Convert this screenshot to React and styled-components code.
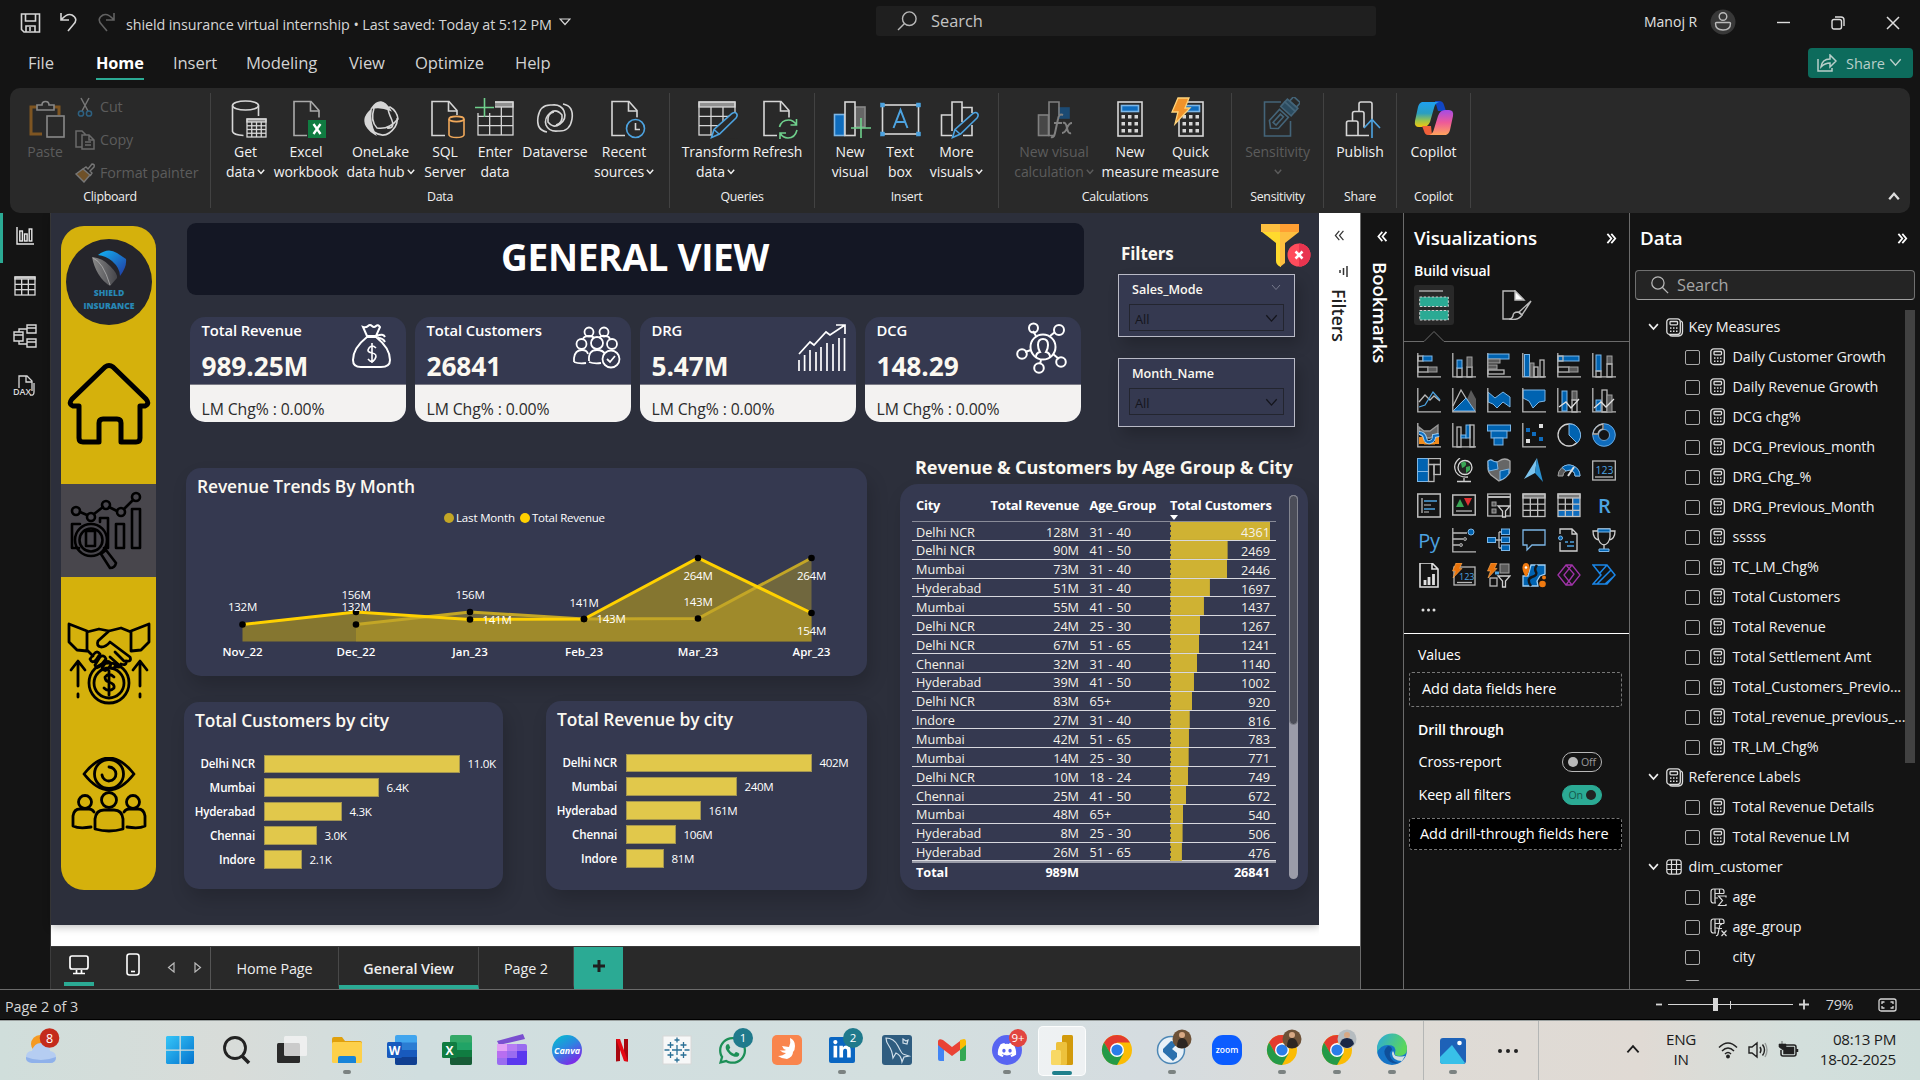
import React from 'react';
import styled, { createGlobalStyle } from 'styled-components';
import { FaWhatsapp, FaLinkedinIn, FaDiscord } from 'react-icons/fa';

const Global = createGlobalStyle`
  * { box-sizing: border-box; }
  body { margin: 0; background: #141414; overflow: hidden; }
  svg { display: block; flex: none; }
  svg text { font-family: "Open Sans", "Noto Sans", sans-serif; }
`;

const Screen = styled.div`
  width: 1920px; height: 1080px; display: flex; flex-direction: column;
  background: #141414; color: #fff; font-family: "Open Sans", "Noto Sans", sans-serif;
  font-size: 14px; line-height: 1; white-space: nowrap; overflow: hidden;
`;

/* ---------- title bar and menu ---------- */
const TitleBar = styled.header`
  height: 42px; display: grid; grid-template-columns: 876px 500px 1fr; flex: none;
`;
const TitleLeft = styled.div`
  display: flex; align-items: center; padding: 5px 0 0 20px; color: #d6d6d6; font-size: 14.35px;
  letter-spacing: -0.09px;
`;
const FileName = styled.span`margin: 3px 7px 0 10px;`;
const SearchBox = styled.div`
  margin-top: 6px; height: 30px; border-radius: 3px; background: #1f1f1f; display: flex; align-items: center;
  gap: 14px; padding-left: 21px; font-size: 16.4px; color: #c4c4c4;
`;
const TitleRight = styled.div`
  display: flex; align-items: center; padding: 2px 0 0 268px; font-size: 14px; color: #e0e0e0;
  & > svg:nth-of-type(1) { margin-left: 13px; }
  & > svg:nth-of-type(2) { margin-left: 41px; }
  & > svg:nth-of-type(3) { margin-left: 41px; margin-top: 2px; }
  & > svg:nth-of-type(4) { margin-left: 41px; margin-top: 2px; }
`;
const MenuBar = styled.nav`
  height: 46px; flex: none; display: flex; justify-content: space-between; padding: 6px 7px 0 28px;
`;
const MenuItems = styled.div`display: flex; gap: 29px; font-size: 16.6px; color: #d2d2d2;`;
const MenuItem = styled.span`
  height: 32px; padding-top: 7px; letter-spacing: -0.1px; width: ${p => p.$w}px;
  ${p => p.$on && 'color:#fff;font-weight:700;font-size:16.3px;border-bottom:2px solid #2baa94;'}
`;
const ShareButton = styled.button`
  width: 105px; height: 30px; border: 0; border-radius: 4px; background: #0d6b5c; color: #b9cfca;
  font: 14.5px "Open Sans", sans-serif; display: flex; align-items: center; gap: 9px; padding: 0 9px;
  & svg:last-child { margin-left: -5px; }
`;

/* ---------- ribbon ---------- */
const Ribbon = styled.section`
  height: 125px; width: 1900px; margin-left: 10px; border-radius: 10px; background: #292929; display: flex; flex: none;
  padding: 5px 0; position: relative; z-index: 2;
`;
const Group = styled.div`
  width: ${p => p.$w}px; border-right: 1px solid #424242; display: flex; flex-direction: column;
  justify-content: space-between; padding-top: 4px;
`;
const GroupButtons = styled.div`display: flex; height: 88px; padding-left: ${p => p.$pad}px;`;
const GroupLabel = styled.div`height: 17px; text-align: center; font-size: 12.4px; letter-spacing: -0.3px; color: #f0f0f0;`;
const RibbonButton = styled.div`
  width: ${p => p.$w}px; display: flex; flex-direction: column; align-items: center; font-size: 14px; line-height: 20px;
  color: ${p => (p.$off ? '#5c5c5c' : '#f2f2f2')}; text-align: center; letter-spacing: -0.06px;
  & > svg { margin-bottom: 3px; }
  & em { font-style: normal; height: 20px; display: flex; align-items: center; gap: 2px; }
`;
const PasteButton = styled(RibbonButton)`& > svg { margin: 1px -8px 2px -2px; }`;
const ClipboardItems = styled.div`display: flex; flex-direction: column; margin: -6px 0 0 7px; color: #5c5c5c;`;
const ClipboardItem = styled.div`height: 32.7px; flex: none; display: flex; align-items: center; gap: 5px; font-size: 14.3px; letter-spacing: -0.1px;`;
const Collapse = styled.div`flex: 1; display: flex; justify-content: flex-end; align-items: flex-end; padding: 0 10px 8px 0;`;

/* ---------- workspace ---------- */
const Workspace = styled.main`height: 776px; display: flex; flex: none;`;
const Rail = styled.aside`
  width: 51px; border-right: 1px solid #3c3c3c; display: flex; flex-direction: column; align-items: center;
`;
const RailItem = styled.div`
  height: 50px; width: 100%; display: flex; align-items: center; justify-content: center;
  border-left: 3px solid ${p => (p.$on ? '#2baa94' : 'transparent')}; padding: 0 3px 4px 0;
`;
const Center = styled.div`width: 1309px; display: flex; flex-direction: column;`;
const CanvasRow = styled.div`height: 733px; display: flex; background: #fff;`;
const Canvas = styled.div`
  width: 1268px; height: 712px; background: #2c2f3b; display: flex; flex: none; box-shadow: 0 2px 8px rgba(0,0,0,.25);
`;
const FilterPane = styled.aside`
  width: 41px; background: #fff; color: #222; display: flex; flex-direction: column; align-items: center;
  padding-top: 17px; clip-path: inset(0);
`;
const FilterGlyph = styled.svg`margin: 24px 0 11px 4px;`;
const VerticalLabel = styled.span`
  writing-mode: vertical-rl; font-weight: 600; font-size: ${p => p.$size}px; line-height: 20px; margin-right: ${p => p.$mr || 0}px;
`;

/* report navigation */
const NavStrip = styled.div`
  width: 95px; height: 664px; margin: 13px 0 0 10px; border-radius: 23px; background: #d5b10c; overflow: hidden;
  display: flex; flex-direction: column; align-items: center;
`;
const LogoDisc = styled.div`
  width: 86px; height: 86px; margin: 13px 0 37px 1px; border-radius: 50%; background: #25252b; flex: none;
  display: flex; flex-direction: column; align-items: center; padding-top: 10px; color: #2787b5;
  font: 800 8.6px/12.5px "Open Sans", sans-serif; text-align: center;
`;
const NavSelected = styled.div`
  width: 95px; height: 93px; margin: 39px 0 45px; background: #48464c; display: flex; align-items: center; justify-content: center;
`;
const NavGap = styled.div`height: 51px;`;

const Report = styled.div`flex: 1; display: flex; flex-direction: column; padding-left: 27px;`;
const TopRow = styled.div`height: 240px; display: flex; padding-left: 4px;`;
const TopMain = styled.div`width: 897px; padding-top: 10px;`;
const Banner = styled.h1`
  margin: 0; height: 72px; border-radius: 9px; background: #141724; font-size: 37px; font-weight: 700;
  display: flex; align-items: center; justify-content: center; padding: 0 1px 5px 0; letter-spacing: -0.3px;
`;
const Kpis = styled.div`display: flex; gap: 9px; margin: 22px 0 0 3px;`;
const Kpi = styled.article`
  width: 216px; height: 105px; border-radius: 15px; background: #353950; overflow: hidden; flex: none;
  display: flex; flex-direction: column;
`;
const KpiTop = styled.div`height: 68px; display: flex; justify-content: space-between; padding: 5px ${p => p.$pr}px 0 11.5px; border-bottom: 1px solid #7a7a85;`;
const KpiName = styled.div`font-size: 14.8px; font-weight: 600; line-height: 17px; letter-spacing: -0.1px;`;
const KpiValue = styled.div`font-size: 26.3px; font-weight: 700; line-height: 26px; margin-top: 14px; color: #fbf8f0; letter-spacing: -0.1px;`;
const KpiNote = styled.div`flex: 1; background: #f3f2f1; color: #2c2c2c; padding: 16.5px 0 0 11.5px; font-size: 15.8px; letter-spacing: -0.1px;`;

const Slicers = styled.div`width: 193px; margin-left: 34px; padding-top: 11px;`;
const SlicerHead = styled.div`
  display: flex; justify-content: space-between; height: 50px; padding-left: 3px; font-size: 17px; font-weight: 700; padding-top: 0;
  color: #fbf8f0; & span { padding-top: 21px; letter-spacing: -0.1px; }
`;
const Slicer = styled.div`
  width: 177px; height: ${p => p.$h}px; border: 1px solid #b9bac6; background: #353950; padding: 9px 10px; margin-bottom: 21px;
  box-shadow: 5px 8px 14px rgba(0,0,0,.2);
`;
const SlicerName = styled.div`display: flex; justify-content: space-between; height: 20px; padding: 0 3px 0 3px; font-size: 12.6px; font-weight: 600; color: #fbf8f0;`;
const Dropdown = styled.div`
  width: 155px; height: 27px; border: 1px solid #23252f; display: flex; align-items: center; justify-content: space-between;
  padding: 3px 5px 0 5px; font-size: 12.8px; color: #14151c;
`;

const BottomRow = styled.div`display: flex; height: 459px;`;
const Charts = styled.div`width: 684px; padding-top: 15px;`;
const Card = styled.section`
  background: #353950; border-radius: ${p => p.$r || 15}px; width: ${p => p.$w}px; height: ${p => p.$h}px;
  box-shadow: 4px 10px 18px rgba(0,0,0,.17);
`;
const CardTitle = styled.h2`margin: 0; font-size: 17.4px; line-height: 20px; font-weight: 600; color: #fbf8f0; padding: 8px 0 1px 11px; letter-spacing: -0.1px;`;
const TrendCard = styled(Card)`margin-left: 3px;`;
const CityRow = styled.div`display: flex; justify-content: space-between; align-items: flex-start; margin: 26px 0 0 1px;`;
const CityCard = styled(Card)`margin-top: ${p => p.$top}px;`;
const BarList = styled.div`margin-top: 23.5px; display: flex; flex-direction: column; gap: 5px;`;
const BarLine = styled.div`
  height: 18.9px; display: grid; grid-template-columns: 71px auto 1fr; align-items: center; font-size: 11.6px; color: #fff;
  & b { text-align: right; font-weight: 600; letter-spacing: -0.15px; }
  & span { letter-spacing: -0.35px; }
`;
const Bar = styled.i`display: block; height: 18.9px; background: #e1c84b; border: 1px solid #a39550; margin: 0 8px 0 8.5px; width: ${p => p.$w}px;`;

const TableArea = styled.div`margin-left: 33px; width: 408px;`;
const TableTitle = styled.h2`margin: 0; height: 31px; padding: 4px 0 0 15px; font-size: 18.1px; line-height: 20px; font-weight: 700; color: #fbf8f0; letter-spacing: -0.1px;`;
const TableBody = styled.div`display: flex; justify-content: space-between; padding: 11px 10.5px 0 12px;`;
const Table = styled.div`width: 364px;`;
const Row = styled.div`
  height: 18.87px; display: grid; grid-template-columns: 82px 81px 91px 1fr; align-items: center; border-bottom: 1px solid #d8d8de;
  font-size: 12.7px; padding-left: 4px; color: #f4f1e8; padding-right: 6px; letter-spacing: -0.03px;
  & > * { padding-top: 2px; }
  & > :nth-child(2) { text-align: right; }
  & > :nth-child(3) { padding-left: 10.5px; word-spacing: 1px; }
`;
const HeadRow = styled(Row)`
  height: 27px; font-weight: 700; font-size: 12.8px; color: #fff; border-color: #8a8c99; align-items: start; padding-top: 2px; letter-spacing: -0.2px;
  & > * { white-space: nowrap; }
  & > :nth-child(2) { direction: rtl; }
`;
const TotalRow = styled(Row)`border: 0; border-top: 2px solid #9a9ca8; height: 20px; padding-bottom: 2px; font-weight: 700; color: #fff;`;
const SortHead = styled.div`
  display: flex; flex-direction: column; align-items: flex-start;
  &::after { content: ''; border: 4.5px solid transparent; border-top: 5px solid #fff; border-bottom: 0; margin-top: 3px; }
`;
const DataCell = styled.div`
  height: 17.9px; border-left: 1px dashed #b09a3a; text-align: right; line-height: 16px;
  background: linear-gradient(#cfb233, #cfb233) left / ${p => p.$w}px 100% no-repeat;
`;
const TotalCell = styled.div`text-align: right;`;
const ScrollTrack = styled.div`width: 9px; height: 384px; border-radius: 5px; background: #9b9ca9;`;
const ScrollThumb = styled.div`height: 230px; border-radius: 5px; background: #4b4d58; border: 1px solid #83858f;`;

/* page tabs */
const Tabs = styled.div`height: 43px; background: #292929; border-top: 1px solid #3a3a3a; display: flex;`;
const TabTools = styled.div`width: 160px; display: flex; border-right: 1px solid #555; padding-left: 13px; align-items: flex-start; flex: none;`;
const DeviceTool = styled.div`
  width: 30px; height: 39px; padding-top: ${p => p.$top}px; display: flex; justify-content: center; margin-right: ${p => p.$gap}px; flex: none;
  border-bottom: 4px solid ${p => (p.$on ? '#2baa94' : 'transparent')};
`;
const Arrow = styled.div`padding: 15px 0 0; width: ${p => p.$w}px; flex: none;`;
const Tab = styled.div`
  width: ${p => p.$w}px; border-right: 1px solid #484848; display: flex; align-items: center; justify-content: center; font-size: 14.4px; color: #eee;
  letter-spacing: -0.1px; padding-top: 6px; border-bottom: 4px solid ${p => (p.$on ? '#2baa94' : 'transparent')}; font-weight: ${p => (p.$on ? 600 : 400)};
`;
const AddTab = styled.div`width: 49px; background: #2baa94; color: #1c1c1c; display: flex; align-items: center; justify-content: center; padding-bottom: 4px;`;

/* side panes */
const Bookmarks = styled.aside`width: 43px; border-left: 1px solid #6b6b6b; padding-top: 18px; display: flex; flex-direction: column; align-items: center; gap: 20px; color: #fff;`;
const VizPane = styled.aside`width: 227px; border-left: 1px solid #6b6b6b; border-right: 1px solid #6b6b6b;`;
const DataPane = styled.aside`width: 290px;`;
const PaneTitle = styled.h3`
  margin: 0; height: 50px; display: flex; align-items: center; justify-content: space-between; font-size: 18.8px; font-weight: 600;
  padding: 0 12px 0 10px; letter-spacing: -0.1px;
`;
const SubTitle = styled.div`font-size: 14.1px; font-weight: 600; padding: 1px 0 0 10px; height: 22px; letter-spacing: -0.13px;`;
const Modes = styled.div`display: flex; padding-left: 10px; height: 56px;`;
const Mode = styled.div`width: 40px; height: 40px; border-radius: 3px; background: ${p => (p.$on ? '#292929' : 'transparent')}; margin-right: 43px; display: flex; align-items: center; justify-content: center;`;
const ModeRule = styled.svg`margin-top: -10px;`;
const VizGrid = styled.div`
  display: grid; grid-template-columns: repeat(6, 35.05px); grid-auto-rows: 35px; justify-items: center; align-items: center;
  padding: 4px 0 0 7.5px; height: 290px; border-bottom: 1px solid #fff; align-content: start;
`;
const LanguageGlyph = styled.span`font-size: 20px; line-height: 30px; color: #4da3e0; letter-spacing: -0.3px; font-weight: ${p => p.$w || 400};`;
const FieldLabel = styled.div`padding-left: 14px; font-size: 14.1px; height: ${p => p.$h}px; line-height: ${p => p.$lh || p.$h}px; font-weight: ${p => p.$w || 400}; letter-spacing: -0.08px;`;
const FieldWell = styled.div`
  margin-left: 5px; width: 213px; height: ${p => p.$h}px; border: 1px dashed #777; border-radius: 3px; background: ${p => p.$bg || 'transparent'};
  display: flex; align-items: center; padding-left: ${p => p.$pad}px; font-size: 14.5px; letter-spacing: -0.06px;
`;
const ToggleRow = styled.div`display: flex; height: 33px; align-items: center; justify-content: space-between; padding: 0 27px 0 14.5px; font-size: 14.3px; letter-spacing: -0.1px;`;
const Toggle = styled.div`
  width: 40px; height: 20px; border-radius: 10px; font-size: 10.6px; display: flex; align-items: center; gap: 3px; padding: 0 5px;
  border: 1px solid ${p => (p.$on ? '#2baa94' : '#b8b8b8')}; background: ${p => (p.$on ? '#2baa94' : 'transparent')};
  color: ${p => (p.$on ? '#15584c' : '#999')}; flex-direction: ${p => (p.$on ? 'row-reverse' : 'row')};
  &::before { content: ''; width: 10px; height: 10px; border-radius: 50%; background: ${p => (p.$on ? '#222' : '#b8b8b8')}; }
`;
const FieldSearch = styled.div`
  width: 280px; height: 30px; margin: 7px 0 0 5px; border: 1px solid #707070; border-bottom-color: #a0a0a0; border-radius: 4px; background: #242424;
  display: flex; align-items: center; gap: 8px; padding-left: 15px; font-size: 16.3px; color: #a6a6a6;
`;
const TreeArea = styled.div`height: 671px; margin-top: 10px; display: flex; overflow: hidden;`;
const Tree = styled.div`flex: 1; padding-top: 2px;`;
const TreeRow = styled.div`
  height: 30px; display: flex; align-items: center; font-size: 14.35px; letter-spacing: -0.12px; color: #f0f0f0;
  padding-left: ${p => (p.$child ? 55 : 18)}px; & span { margin-left: 6.500px; }
`;
const Checkbox = styled.i`width: 15px; height: 15px; border: 1px solid #a8a8a8; border-radius: 2px; margin-right: 10px; flex: none;`;
const IconSlot = styled.div`width: 16px; height: 20px; display: flex; align-items: center; margin-left: ${p => p.$ml || 0}px;`;
const TreeScroll = styled.div`width: 10px; height: 453px; background: #424242; margin-right: 5px;`;

/* status and task bar */
const StatusBar = styled.footer`
  height: 31px; flex: none; border-top: 1px solid #6b6b6b; display: flex; justify-content: space-between; padding: 10px 23px 0 5px; font-size: 14.4px;
  color: #d6d6d6; border-bottom: 1px solid #000; letter-spacing: -0.05px;
`;
const Zoom = styled.div`display: flex; gap: 15px; margin-top: -3px; & > span { padding-top: 1px; letter-spacing: -0.4px; margin-left: -1px; } & > :last-child { margin: 1px 0 0 10px; }`;
const TaskBar = styled.footer`
  height: 60px; flex: none; background: linear-gradient(90deg, #d0dedb 0, #d8dcd9 230px, #d0dedf 420px, #d3dfdf 900px, #d5dce0 1150px, #dedbd6 1400px, #e0dad4 1640px, #d3dfdc 1800px, #cfdedb 100%);
  display: flex; color: #1c1c1c; border-top: 1px solid #9aa09f;
`;
const TaskWeather = styled.div`width: 152px; padding: 6px 0 0 25px;`;
const TaskItem = styled.div`
  width: ${p => p.$w || 55}px; height: 59px; display: flex; flex-direction: column; align-items: center; padding-top: 14px; gap: 5px;
  & > svg { overflow: visible; }
`;
const TaskTile = styled.div`
  width: 48px; height: 50px; margin-top: -9px; border-radius: 5px; background: rgba(255,255,255,.6); border: 1px solid rgba(255,255,255,.8);
  display: flex; flex-direction: column; align-items: center; justify-content: space-between; padding-top: 8px;
`;
const Dot = styled.i`width: ${p => p.$w || 8}px; height: 4px; border-radius: 2px; background: ${p => p.$c || '#7b8281'};`;
const TaskSep = styled.i`width: 1px; height: 59px; background: #b4b6b5;`;
const Tray = styled.div`flex: 1; display: flex; align-items: center; padding: 0 24px 3px 87px; font-size: 15.2px;`;
const TrayText = styled.div`text-align: ${p => p.$align}; line-height: 20px; letter-spacing: -0.3px; margin-left: ${p => p.$ml}px;`;
const TraySymbols = styled.div`display: flex; gap: 10px; margin: 2px auto 0 22px; align-items: center;`;

/* ---------- shared glyphs ---------- */
const W = '#d6d6d6', B = '#0f6cbd', LB = '#4da3e0';
const Chev = ({ s = 8, c = 'currentColor', w = 1.4, up }) => (
  <svg width={s} height={s * 0.7} viewBox="0 0 10 7" fill="none" stroke={c} strokeWidth={w}>
    <path d={up ? 'M1 6L5 1.5 9 6' : 'M1 1l4 4.5L9 1'} />
  </svg>
);
const Dbl = ({ right, c = '#fff', w = 1.9, s = 11 }) => (
  <svg width={s} height={s} viewBox="0 0 11 12" fill="none" stroke={c} strokeWidth={w}>
    <path d={right ? 'M1 1l4.3 5L1 11M5.3 1l4.3 5-4.3 5' : 'M5.3 1L1 6l4.3 5M9.8 1L5.5 6l4.3 5'} />
  </svg>
);
const Glass = ({ s = 20, flip, c = '#b8b8b8' }) => (
  <svg width={s} height={s} viewBox="0 0 20 20" fill="none" stroke={c} strokeWidth="1.4">
    <g transform={flip ? '' : 'matrix(-1 0 0 1 20 0)'}><circle cx="7.7" cy="7.7" r="6.8" /><path d="M12.5 12.5L19 19" /></g>
  </svg>
);
const RI = ({ children, o = 1 }) => (
  <svg width="44" height="42" viewBox="0 0 44 42" fill="none" stroke={W} strokeWidth="1.6" opacity={o}>{children}</svg>
);
const Page = ({ x = 9 }) => (
  <g transform={`translate(${x} 0)`}><path d="M14 38.500H1V4.500h17l8 9v7" /><path d="M17.500 5v9H26" /></g>
);
const Cells = ({ x, y, w, h, cols, rows, c = W, sw = 1.3, head }) => (
  <g stroke={c} strokeWidth={sw}>
    <rect x={x} y={y} width={w} height={h} />
    {head && <rect x={x} y={y} width={w} height={head} fill={c} fillOpacity=".6" />}
    {Array.from({ length: cols - 1 }, (_, i) => <path key={'c' + i} d={`M${x + (w / cols) * (i + 1)} ${y + (head || 0)}V${y + h}`} />)}
    {Array.from({ length: rows - 1 }, (_, i) => <path key={'r' + i} d={`M${x} ${y + (head || 0) + ((h - (head || 0)) / rows) * (i + 1)}H${x + w}`} />)}
  </g>
);
const Pencil = () => <path d="M17.500 40.500l2.500-8L38 16.500q3-2 4.500 0t-.5 4.500L25.500 37zM20 32.500l5 4.500" stroke={LB} fill="#292929" />;
const CalcBody = ({ x }) => (
  <g transform={`translate(${x} 4)`}>
    <rect x="1" y="1" width="24" height="34" /><rect x="4.500" y="4.500" width="17" height="6" fill="#0f6cbd" stroke="#7cb6e6" />
    {[14, 21, 28].map(y => [4.5, 11, 17.5].map(px => <rect key={px + '-' + y} x={px} y={y} width="3.500" height="3.500" fill={W} stroke="none" />))}
  </g>
);

const icons = {
  paste: <RI o=".55"><path d="M16 36H5V9h6M28 9h5v8" stroke="#c47a1d" strokeWidth="3" /><path d="M11 12V7h5q0-3.500 3.500-3.500T23 7h5v5z" /><rect x="21" y="18" width="17" height="21" fill="#292929" /></RI>,
  getdata: <RI><ellipse cx="21.500" cy="8.500" rx="13" ry="4.500" /><path d="M8.500 8.500v26q1 3.500 11 4M34.500 8.500V19" /><rect x="22" y="21" width="20" height="20" fill="#292929" stroke="none" /><Cells x={23} y={22} w={19} h={18} cols={4} rows={4} head={3} /></RI>,
  excel: <RI><g opacity=".75"><Page /></g><rect x="24" y="23" width="18" height="18" fill="#107c41" stroke="none" /><path d="M29.500 27l7 10m0-10l-7 10" stroke="#fff" strokeWidth="2.300" /></RI>,
  onelake: <RI><path d="M13 11q9-13 18 2-9-4-18-2z" fill={W} /><path d="M12 13Q2 22 9 31q2 3 7 6-6-12-4-24z" fill={W} /><path d="M15 11q-4 13 3 20 12 2 21-9-1-8-8-12-4 0 1 11t-4 10" /><path d="M15 35q12 8 21-5 3-5 2-9" /></RI>,
  sql: <RI><Page x={8} /><g stroke="#f0a85a"><rect x="24" y="18" width="19" height="24" fill="#292929" stroke="none" /><ellipse cx="33.500" cy="22" rx="7.500" ry="2.600" /><path d="M26 22v16q1 2.500 7.500 2.500T41 38V22" /></g></RI>,
  enter: <RI><Cells x={5} y={5} w={35} h={33} cols={3} rows={3} head={5} /><path d="M0 0h22v16H0z" fill="#292929" stroke="none" /><path d="M2 10.500h19M11.500 1v19" stroke="#6fd08c" /></RI>,
  dataverse: <RI><path d="M14 35Q3 33 5 20T19 8q9-1 12 6 3 8-4 13t-12-2q-1-9 6-10" /><path d="M30 7q11 2 9 15T25 34q-9 1-12-6-2-7 4-12t12 2q1 8-6 10" /></RI>,
  recent: <RI><Page /><circle cx="33.500" cy="31.500" r="11" fill="#292929" stroke="none" /><circle cx="33.500" cy="31.500" r="9" stroke={LB} /><path d="M33.500 26v6.500H38" /></RI>,
  transform: <RI><Cells x={5} y={5} w={36} h={33} cols={3} rows={3} head={5} /><path d="M18 41L44 15v27z" fill="#292929" stroke="none" /><Pencil /></RI>,
  refresh: <RI><Page x={7} /><circle cx="32" cy="32" r="11" fill="#292929" stroke="none" /><path d="M23.500 30q2-7 9-7 5 0 8 5m0-6v6h-6M41 33q-2 8-9 8-5 0-8-5m0 6v-6h6" stroke="#6fd08c" /></RI>,
  newvisual: <RI><rect x="6.500" y="17.500" width="10" height="21" fill={B} stroke="#7cb6e6" /><rect x="27" y="10" width="10" height="20" fill="#666" stroke="#888" /><rect x="17" y="5" width="10" height="33.500" fill="#292929" /><path d="M23 31h20M33 21v20" stroke="#6fd08c" /></RI>,
  textbox: <RI><rect x="4.500" y="8" width="36" height="29" />{[[4.5, 8], [40.5, 8], [4.5, 37], [40.5, 37]].map(([x, y]) => <rect key={x + '-' + y} x={x - 2} y={y - 2} width="4" height="4" fill={LB} stroke={LB} strokeWidth=".5" />)}<path d="M15.500 31L22.500 13l7 18M18 25h9" stroke={LB} strokeWidth="2" /></RI>,
  morevisual: <RI><path d="M17 38.500H6.500V18H17M27 10.500h10V16M37 28v10.500h-9" /><path d="M17 34V5h10v20" /><Pencil /></RI>,
  newcalc: <RI o=".5"><rect x="6.500" y="18" width="10" height="20.500" fill="#666" /><rect x="27" y="11" width="10" height="10" fill={B} stroke={B} /><path d="M27 18V5H17v33.500h6" /><path d="M31 18q-4-2-5 4l-3 14q-1 5-4 4M22 26h8M31 26q3-1 4 5t4 5M40 26q-3 0-5 5t-5 5" strokeWidth="2" /></RI>,
  measure: <RI><CalcBody x={9} /></RI>,
  quick: <RI><CalcBody x={9} /><path d="M9 1h11l-4 10h5L6 27l3-12H3z" fill="#f0932b" stroke="#ffd37a" strokeWidth="1.300" /></RI>,
  sensitivity: <RI o=".5"><path d="M25 5H8.500v34h26V24" stroke="#5fa0c8" /><g stroke="#5fa0c8" transform="rotate(42 26 20)"><rect x="21" y="-3" width="9" height="6" /><rect x="18" y="3" width="14" height="4" fill="#2f6f98" /><rect x="18" y="7" width="14" height="6" fill="#2f6f98" /><path d="M19 16h12v15l-6 5-6-5z" /><path d="M23 19h4v11h-4z" /></g></RI>,
  publish: <RI><path d="M31 38.500H8.500V26q0-2 2-2H18q2 0 2 2v12.500M14.500 24v-7.500q0-2 2-2H24q2 0 2 2v14M21 14.500V7q0-2 2-2h9q2 0 2 2v15" /><path d="M34 41V23M26 31l8-8.500 8 8.500" stroke={LB} /></RI>,
  copilot: (
    <svg width="44" height="42" viewBox="0 0 44 42">
      <defs>
        <linearGradient id="cpA" x1="0" y1="0" x2="0" y2="1"><stop offset="0" stopColor="#1ea0f0" /><stop offset=".45" stopColor="#2a9ec0" /><stop offset=".75" stopColor="#9bc44a" /><stop offset="1" stopColor="#f4c60e" /></linearGradient>
        <linearGradient id="cpB" x1="0" y1="0" x2="0" y2="1"><stop offset="0" stopColor="#a54be6" /><stop offset=".5" stopColor="#ee5a98" /><stop offset="1" stopColor="#ffa45c" /></linearGradient>
      </defs>
      <path d="M23 4h4q4 0 5 4l2 6h-8z" fill="#1146c4" /><path d="M10 5h17q-4 1-5 6l-4 14q-2 5-7 5H7q-5 0-4-6l3-14q1-4 4-5z" fill="url(#cpA)" />
      <path d="M20 38h-4q-3 0-4-4l-2-5h9z" fill="#f0603a" /><path d="M34 38H17q4-1 5-6l4-13q2-6 7-6h4q5 0 4 6l-3 14q-1 4-4 5z" fill="url(#cpB)" />
    </svg>
  ),
};

const ribbonGroups = [
  { label: 'Data', w: 459, pad: 7.5, items: [['getdata', 54, 'Get', 'data', 1], ['excel', 67, 'Excel', 'workbook'], ['onelake', 82, 'OneLake', 'data hub', 1], ['sql', 47, 'SQL', 'Server'], ['enter', 53, 'Enter', 'data'], ['dataverse', 67, 'Dataverse', ''], ['recent', 71, 'Recent', 'sources', 1]] },
  { label: 'Queries', w: 145, pad: 12, items: [['transform', 67, 'Transform', 'data', 1], ['refresh', 57, 'Refresh', '']] },
  { label: 'Insert', w: 184, pad: 10, items: [['newvisual', 50, 'New', 'visual'], ['textbox', 50, 'Text', 'box'], ['morevisual', 63, 'More', 'visuals', 1]] },
  { label: 'Calculations', w: 233, pad: 9, items: [['newcalc', 92, 'New visual', 'calculation', 1, 1], ['measure', 60, 'New', 'measure'], ['quick', 61, 'Quick', 'measure']] },
  { label: 'Sensitivity', w: 92, pad: 0, items: [['sensitivity', 92, 'Sensitivity', '', 1, 1]] },
  { label: 'Share', w: 73, pad: 0, items: [['publish', 73, 'Publish', '']] },
  { label: 'Copilot', w: 74, pad: 0, items: [['copilot', 73, 'Copilot', '']] },
];

/* ---------- visual gallery ---------- */
const V = ({ children }) => <svg width="24" height="25" viewBox="0 0 24 25" fill="none" stroke="#b8b8b8" strokeWidth="1.300">{children}</svg>;
const Ax = () => <path d="M.8 0v23.800H24" />;
const bl = { fill: '#0063b1', stroke: '#7cb6e6', strokeWidth: 1 };
const gy = { fill: '#5a5a5a', stroke: '#a0a0a0', strokeWidth: 1 };
const Rx = ({ x, y, w, h, k = {} }) => <rect x={x} y={y} width={w} height={h} {...k} />;
const Funnelet = () => <path d="M11 13h12l-4.500 5v6h-3v-6z" fill="#141414" stroke="#d0d0d0" />;
const Zap = () => <path d="M4 0h6L7.500 5.500H10L1 15l2.500-7H.5z" fill="#e8730c" stroke="#ffb25c" strokeWidth=".6" />;
const gallery = [
  <V><Ax /><Rx x={1} y={3} w={5} h={5} /><Rx x={6} y={3} w={9} h={5} k={bl} /><Rx x={1} y={14} w={10} h={5} /><Rx x={11} y={14} w={9} h={5} k={gy} /></V>,
  <V><Ax /><Rx x={5} y={15} w={5} h={9} /><Rx x={5} y={7} w={5} h={8} k={bl} /><Rx x={15} y={14} w={5} h={10} /><Rx x={15} y={4} w={5} h={10} k={gy} /></V>,
  <V><Ax /><Rx x={1} y={1} w={21} h={5} k={bl} /><Rx x={1} y={6} w={12} h={4} k={gy} /><Rx x={1} y={12} w={9} h={4} k={gy} /><Rx x={1} y={17} w={16} h={4} /></V>,
  <V><Ax /><Rx x={2.5} y={1.5} w={5} h={22} k={bl} /><Rx x={8} y={10} w={4} h={14} k={gy} /><Rx x={12} y={14} w={4} h={10} /><Rx x={18} y={7} w={4} h={17} /></V>,
  <V><Ax /><Rx x={1} y={3} w={21} h={5} k={bl} /><Rx x={1} y={3} w={5} h={5} /><Rx x={1} y={14} w={11} h={5} /><Rx x={12} y={14} w={9} h={5} k={gy} /></V>,
  <V><Ax /><Rx x={4} y={2} w={5} h={16} k={bl} /><Rx x={4} y={18} w={5} h={6} /><Rx x={15} y={3} w={5} h={8} k={gy} /><Rx x={15} y={11} w={5} h={13} /></V>,
  <V><Ax /><path d="M2 14L8 7l5 5 4-4 6 5" /><path d="M2 19l6-2 8-13 7 8" stroke={LB} /></V>,
  <V><path d="M12 18l7-16 5 9v12H14z" fill="#5a5a5a" stroke="none" /><path d="M1 18L9 2l8 13" /><path d="M1 23l13-13 9 13z" {...bl} /><Ax /></V>,
  <V><path d="M1 4l7 6 8-6 7 5v10l-7-5-6 6-4-4-5-2z" {...bl} /><Ax /></V>,
  <V><path d="M1 2h22v11l-6 1-6 6-4-7-6-3z" {...bl} /><Ax /></V>,
  <V><Ax /><Rx x={5} y={3} w={5} h={20} k={bl} /><Rx x={15} y={3} w={5} h={9} k={gy} /><Rx x={15} y={12} w={5} h={12} /><path d="M2 19l7-5 5 6 8-9" stroke="#e0e0e0" /></V>,
  <V><Ax /><Rx x={4} y={12} w={5} h={11} k={bl} /><Rx x={10} y={2} w={5} h={22} /><Rx x={15} y={7} w={5} h={17} k={gy} /><path d="M2 20l7-6 5 5 8-8" stroke="#e0e0e0" /></V>,
  <V><path d="M2 4l5 4h6l8-6v8l-8 5H8l-6-4z" fill="#666" stroke="#999" /><path d="M2 14h5v7H2zM18 13h4v8h-4zM7 19h11v2.500H7z" fill="#f08c1e" stroke="none" /><path d="M2 10q5 0 6 5t5 4 4-6l5-1" stroke="#9fd0f5" strokeWidth="4" /><path d="M2 10q5 0 6 5t5 4 4-6l5-1" stroke="#0f6cbd" strokeWidth="2.200" /><Ax /></V>,
  <V><Ax /><Rx x={5} y={4} w={4} h={20} /><Rx x={9} y={12} w={5} h={3} k={bl} /><Rx x={14} y={2} w={4} h={13} k={bl} /><Rx x={18} y={2} w={4} h={22} /></V>,
  <V><Rx x={.5} y={2} w={23} h={6} k={bl} /><Rx x={4} y={8} w={16} h={7} k={bl} /><Rx x={7} y={15} w={9} h={7} k={bl} /></V>,
  <V><Ax /><g stroke="none"><rect x="17" y="1" width="4" height="4" fill="#ddd" /><rect x="4" y="5" width="4" height="4" fill="#0f6cbd" /><rect x="10" y="9" width="4" height="4" fill="#0f6cbd" /><rect x="17" y="14" width="4" height="4" fill="#0f6cbd" /><rect x="4" y="16" width="4" height="4" fill="#ddd" /></g></V>,
  <V><circle cx="12" cy="12" r="11" stroke="#d0d0d0" /><path d="M12 1a11 11 0 018 19l-8-8z" {...bl} /></V>,
  <V><circle cx="12" cy="12" r="8.500" stroke="#0f6cbd" strokeWidth="6" /><circle cx="12" cy="12" r="11.300" stroke="#7cb6e6" strokeWidth=".8" /><circle cx="12" cy="12" r="5.500" stroke="#7cb6e6" strokeWidth=".8" /><path d="M3.500 12A8.500 8.500 0 0112 3.500" stroke="#141414" strokeWidth="5" /><path d="M1 11A11 11 0 0111 1v5a6 6 0 00-5 5z" /></V>,
  <V><Rx x={.5} y={.5} w={11} h={13} k={bl} /><Rx x={.5} y={13.5} w={11} h={10} k={bl} /><Rx x={11.5} y={.5} w={12} h={6} /><Rx x={11.5} y={6.5} w={5.5} h={17} /><Rx x={17} y={6.5} w={6.5} h={10} /></V>,
  <V><circle cx="13" cy="9.500" r="7" fill="#222" stroke="#d8d8d8" /><path d="M9 5q4-3 5 0t-4 5zM14 9l4-1v4l-4 3z" fill="#3aa655" stroke="none" /><path d="M8 0Q0 6 4 14q4 6 12 5M12 20v3.500M5 23.500h14" stroke="#d0d0d0" /></V>,
  <V><path d="M1 3q3-2 5 0 3 2 6 0 6-4 11 0v11q-3 6-11 9-4-3-8-6-3-3-3-6z" fill="#666" stroke="#a8a8a8" /><path d="M1 3q3-2 5 0 2 1 4 1l1 7-9 2q-1-4-1-10zM13 13l9-2q1 5-3 8-4 3-6 3z" {...bl} /></V>,
  <V><path d="M15 0L2 21l11-6z" fill="#7cc4ee" stroke="none" /><path d="M15 0l6 24-8-9z" fill="#2a8fce" stroke="none" /></V>,
  <V><path d="M1 18a11 11 0 0122 0h-5a6 6 0 00-12 0z" {...gy} /><path d="M5 9.500A11 11 0 0123 18h-5q0-5-5-6l-4 1z" {...bl} /><path d="M11 18l6-9" stroke="#e0e0e0" strokeWidth="2" /></V>,
  <V><Rx x={.7} y={3} w={22.6} h={19} /><path d="M3 19h18" /><text x="3.500" y="16" fontSize="10.500" fill={LB} stroke="none">123</text></V>,
  <V><Rx x={.7} y={1} w={22.6} h={23} k={{ strokeWidth: 1.6 }} /><path d="M5 5v15" /><path d="M7 8h13M7 16h11" stroke={LB} strokeWidth="1.600" /><path d="M7 12h7M7 19h5" stroke="#888" /></V>,
  <V><Rx x={.7} y={2} w={22.6} h={20} k={{ strokeWidth: 1.6 }} /><path d="M4 14l4-8 4 8z" fill="#3aa655" stroke="none" /><path d="M12 5h8l-4 8z" fill="#e03030" stroke="none" /><path d="M4 18h16" /></V>,
  <V><Rx x={.7} y={1} w={22.6} h={22} /><path d="M1 4h22" strokeWidth="2" /><Rx x={5} y={9} w={4} h={4} k={gy} /><Rx x={5} y={16} w={4} h={4} k={gy} /><Funnelet /></V>,
  <V><Cells x={1} y={1} w={22} h={22.5} cols={3} rows={3} head={4} c="#c0c0c0" /></V>,
  <V><rect x="16" y="5" width="7" height="18" fill="#0f6cbd" stroke="none" /><rect x="1" y="17" width="22" height="6" fill="#0f6cbd" stroke="none" /><Cells x={1} y={1} w={22} h={22.5} cols={3} rows={3} head={4} c="#c0c0c0" /></V>,
  <LanguageGlyph $w={600}>R</LanguageGlyph>,
  <LanguageGlyph>Py</LanguageGlyph>,
  <V><Ax /><path d="M1 5h14M1 11h10M1 17h7" /><circle cx="19" cy="4" r="3" {...bl} /><circle cx="13" cy="11" r="1.500" {...gy} /><circle cx="9" cy="17" r="1.500" {...gy} /></V>,
  <V><path d="M9 12h3M12 4v16M12 4h3M12 12h3M12 20h3" /><Rx x={.5} y={9.5} w={8} h={5} k={bl} /><Rx x={14.5} y={1} w={8} h={5.5} k={bl} /><Rx x={14.5} y={9} w={8} h={5.5} k={bl} /><Rx x={14.5} y={17} w={8} h={5.500} k={bl} /></V>,
  <V><path d="M1 2h22v15H10l-5 5v-5H1z" stroke="#7cb6e6" /></V>,
  <V><path d="M3 6V1h12l5 5v17H3v-9M15 1v5h5" stroke="#d0d0d0" /><circle cx="3.500" cy="10" r="2" {...bl} /><path d="M8 14h3M13 14h4M10 18h7" stroke={LB} /></V>,
  <V><path d="M6 1h12v8q-1 7-6 8-5-1-6-8zM6 3H1q0 8 6 9M18 3h5q0 8-6 9M12 17v4" stroke="#d0d0d0" /><path d="M6 1h12v3H6zM7 21h10v2.500H7z" {...bl} /></V>,
  <V><path d="M3 0h12l6 6v18H3zM15 0v6h6" stroke="#e0e0e0" strokeWidth="1.600" /><path d="M8 22v-5M12 22v-8M16.500 22v-11" stroke="#e0e0e0" strokeWidth="2.800" /></V>,
  <V><Rx x={2} y={4} w={21} h={18} /><text x="7" y="17" fontSize="9" fill={LB} stroke="none">123</text><path d="M5 19.500h15" /><Zap /></V>,
  <V><Rx x={13} y={1} w={9} h={9} k={gy} /><Rx x={3} y={15} w={7} h={8} /><path d="M8 10h4" stroke={LB} strokeWidth="3" /><Funnelet /><Zap /></V>,
  <V><path d="M9 2h14v9l-5 2-3 5 1 5H1V13h5z" fill="#0063b1" stroke="#9fd0f5" /><path d="M15 2q-3 4-1 7t-4 5-1 9" stroke="#141414" strokeWidth="2.500" /><path d="M4 14Q0 8 .5 4T4 0t3.500 4T4 14z" fill="#f07a10" stroke="none" /><circle cx="4" cy="4.500" r="1.300" fill="#fff" stroke="none" /><circle cx="20.500" cy="21" r="3.300" fill="#f07a10" stroke="none" /><circle cx="22" cy="14.500" r="2" fill="#f07a10" stroke="none" /></V>,
  <V><g stroke="#a033a8"><path d="M1 12l8-10h6l8 10-8 10H9zM9 2l8 9-8 11M15 2L7 12l8 10" /></g></V>,
  <V><g stroke="#1a86e8" strokeWidth="1.500"><path d="M1 2h14l8 10-8 9H1l8-9zM15 2l-8 9M19 7L5 21M21 14l-8 7" /></g></V>,
];

/* ---------- data tree ---------- */
const Calc = ({ stack }) => (
  <svg width="18" height="19" viewBox="0 0 18 19" fill="none" stroke="#dcdcdc" strokeWidth="1.300">
    {stack && <path d="M15 3q2 1 1.500 3v8q0 3.500-4 4H6q-2 0-2.500-1.500" />}
    <rect x=".8" y=".8" width="13.500" height="15.700" rx="3" /><rect x="4" y="3.500" width="7.500" height="3.300" rx=".8" />
    {[9.300, 12.500].map(y => [4, 7, 10].map(x => <rect key={x + '-' + y} x={x} y={y} width="1.500" height="1.500" fill="#dcdcdc" stroke="none" />))}
  </svg>
);
const TableIco = () => (
  <svg width="16" height="16" viewBox="0 0 16 16" fill="none" stroke="#dcdcdc" strokeWidth="1.200"><rect x=".8" y=".8" width="14.400" height="14.400" rx="3" /><path d="M5.500 1v14M10.500 1v14M1 5.500h14M1 10.500h14" /></svg>
);
const ColIco = ({ fx }) => (
  <svg width="18" height="19" viewBox="0 0 18 19" fill="none" stroke="#dcdcdc" strokeWidth="1.200">
    <path d="M14 5.500V3.500Q14 1 11.500 1H3.500Q1 1 1 3.500v9Q1 15 3.500 15H6M5 1v14M5 5.500h9M9.500 1v5M5 10h3" />
    {fx ? <path d="M12 6.500q-2-1-2.500 2L8 16q-.5 2-2 1.500M7.500 10.500H12M11.500 12.500l5 5.500m0-5.500l-5 5.500" /> : <path d="M16 9.500V8H8.500l4 4.500-4 5H16V16" />}
  </svg>
);
const tree = [
  ['g', 'Key Measures'],
  ...['Daily Customer Growth', 'Daily Revenue Growth', 'DCG chg%', 'DCG_Previous_month', 'DRG_Chg_%', 'DRG_Previous_Month', 'sssss', 'TC_LM_Chg%', 'Total Customers', 'Total Revenue', 'Total Settlement Amt', 'Total_Customers_Previo...', 'Total_revenue_previous_...', 'TR_LM_Chg%'].map(t => ['m', t]),
  ['g', 'Reference Labels'], ['m', 'Total Revenue Details'], ['m', 'Total Revenue LM'],
  ['t', 'dim_customer'], ['s', 'age'], ['f', 'age_group'], ['n', 'city'], ['n', ''],
];

/* ---------- report data ---------- */
const rows = [
  ['Delhi NCR', '128M', '31 - 40', 4361], ['Delhi NCR', '90M', '41 - 50', 2469], ['Mumbai', '73M', '31 - 40', 2446], ['Hyderabad', '51M', '31 - 40', 1697],
  ['Mumbai', '55M', '41 - 50', 1437], ['Delhi NCR', '24M', '25 - 30', 1267], ['Delhi NCR', '67M', '51 - 65', 1241], ['Chennai', '32M', '31 - 40', 1140],
  ['Hyderabad', '39M', '41 - 50', 1002], ['Delhi NCR', '83M', '65+', 920], ['Indore', '27M', '31 - 40', 816], ['Mumbai', '42M', '51 - 65', 783],
  ['Mumbai', '14M', '25 - 30', 771], ['Delhi NCR', '10M', '18 - 24', 749], ['Chennai', '25M', '41 - 50', 672], ['Mumbai', '48M', '65+', 540],
  ['Hyderabad', '8M', '25 - 30', 506], ['Hyderabad', '26M', '51 - 65', 476],
];
const customers = [['Delhi NCR', 196, '11.0K'], ['Mumbai', 115, '6.4K'], ['Hyderabad', 78, '4.3K'], ['Chennai', 53, '3.0K'], ['Indore', 38, '2.1K']];
const revenue = [['Delhi NCR', 186, '402M'], ['Mumbai', 111, '240M'], ['Hyderabad', 75, '161M'], ['Chennai', 50, '106M'], ['Indore', 38, '81M']];

const kpiIcons = [
  <svg width="44" height="48" viewBox="0 0 44 48" fill="none" stroke="#fff" strokeWidth="2"><path d="M17 14L13 5q3 1 5-1 2-2 4 0t4 0 4 1l-4 9zM17 15Q3 26 3 38q0 7 8 7h20q9 0 9-7 0-12-14-23zM27 14q6-3 8 1M28 16q5 0 7 4" /><path d="M26 26q-4-4-7 0t3 5 3 6-7 0M22 21v20" strokeWidth="1.600" /></svg>,
  <svg width="48" height="48" viewBox="0 0 48 48" fill="none" stroke="#fff" strokeWidth="1.800"><circle cx="16" cy="10" r="4.500" /><circle cx="31" cy="10" r="4.500" /><circle cx="8.500" cy="22" r="5" /><circle cx="24" cy="21" r="6" /><circle cx="39" cy="22" r="5" /><path d="M10 17q1-3 6-3 4 0 5 2M26 16q2-3 6-2 4 0 5 3M1 40v-4q1-8 8-8 5 0 6 4M1 40q5 2 12 1M16 39q-1-11 8-11 6 0 8 4M16 40q5 2 12 1" /><circle cx="38" cy="37" r="8.500" fill="#353950" /><path d="M34 37l3 3 5-6" /></svg>,
  <svg width="50" height="50" viewBox="0 0 50 50" fill="none" stroke="#fff" strokeWidth="1.700"><path d="M1 32l11-12 4 3L28 10l4 3L47 3M38 3h9v9" />{[[1, 38], [6.600, 33], [12, 28], [18, 30], [23, 25], [29, 21], [35, 22], [41, 16], [46.500, 16]].map(([x, y]) => <path key={x} d={`M${x} 49V${y}`} />)}</svg>,
  <svg width="52" height="52" viewBox="0 0 52 52" fill="none" stroke="#fff" strokeWidth="2"><circle cx="27" cy="25" r="12.500" /><path d="M20 35q0-4 4-5-2-3-2-7 0-6 5-6t5 6q0 4-2 7 4 1 4 5M20 14l-3-5M34 14l5-4M15 28l-6 2M37 32l6 5M25 38l-1 4" /><circle cx="17.500" cy="6" r="4.500" /><circle cx="43" cy="8" r="5" /><circle cx="6" cy="32" r="4.800" /><circle cx="45" cy="40" r="4.800" /><circle cx="23" cy="46" r="4.800" /></svg>,
];
const kpis = [['Total Revenue', '989.25M', 12], ['Total Customers', '26841', 10], ['DRG', '5.47M', 8], ['DCG', '148.29', 13]];

const Trend = () => {
  const X = [56.5, 170, 284, 398, 512, 625.5], base = 144.500;
  const t1 = [[56.5, 127.500], [170, 115], [284, 122.500], [398, 122], [512, 61], [625.5, 116]];
  const t2 = [[170, 127.500], [284, 115], [398, 122], [512, 121.500], [625.5, 61]];
  const line = p => 'M' + p.map(q => q.join(' ')).join('L');
  const labels = [[56.5, 114, '132M'], [170, 102, '156M'], [170, 114, '132M'], [284, 102, '156M'], [311, 127, '141M'], [398, 110, '141M'], [425, 126, '143M'], [512, 83, '264M'], [512, 109, '143M'], [625.5, 83, '264M'], [625.5, 138, '154M']];
  return (
    <svg width="681" height="178" viewBox="0 0 681 178" fontSize="11.500" fill="#fff">
      <circle cx="263" cy="21" r="5" fill="#c3a626" /><text x="270" y="25" textLength="59">Last Month</text>
      <circle cx="339" cy="21" r="5" fill="#ffd100" /><text x="346" y="25" textLength="73">Total Revenue</text>
      <path d={`${line(t1)}V${base}H56.500Z`} fill="#ffd100" opacity=".4" />
      <path d={`${line(t2)}V${base}H170Z`} fill="#c3a626" opacity=".42" />
      <path d={line(t2)} fill="none" stroke="#c3a626" strokeWidth="3" /><path d={line(t1)} fill="none" stroke="#ffd100" strokeWidth="3" />
      {[...t1, ...t2].map(([x, y], i) => <circle key={i} cx={x} cy={y} r="3.300" fill="#000" />)}
      <g textAnchor="middle">
        {labels.map(([x, y, t], i) => <text key={i} x={x} y={y} letterSpacing="-.25">{t}</text>)}
        {['Nov_22', 'Dec_22', 'Jan_23', 'Feb_23', 'Mar_23', 'Apr_23'].map((t, i) => <text key={t} x={X[i]} y="159" fontWeight="600">{t}</text>)}
      </g>
    </svg>
  );
};

const BarCard = ({ title, data, ...rest }) => (
  <CityCard {...rest}>
    <CardTitle>{title}</CardTitle>
    <BarList>{data.map(([n, w, v]) => <BarLine key={n}><b>{n}</b><Bar $w={w} /><span>{v}</span></BarLine>)}</BarList>
  </CityCard>
);

const black = { fill: 'none', stroke: '#000', strokeWidth: 3, strokeLinejoin: 'round', strokeLinecap: 'round' };
const Nav = () => (
  <NavStrip>
    <LogoDisc>
      <svg width="38" height="38" viewBox="0 0 38 38"><defs><linearGradient id="shA" x1="0" x2="1" y1="0" y2="1"><stop offset="0" stopColor="#12b4f4" /><stop offset="1" stopColor="#2238a0" /></linearGradient><linearGradient id="shB" x1="0" x2="1"><stop offset="0" stopColor="#888" /><stop offset="1" stopColor="#45454a" /></linearGradient></defs><path d="M8 6Q18-2 27 4l9 6q1 8-6 17 0-8-8-15-6-5-14-6z" fill="url(#shA)" /><path d="M2 8q11 1 18 9 8 8 7 12l-7 8Q6 28 2 8z" fill="url(#shB)" /><path d="M3 9q10 4 17 27" stroke="#bbb" fill="none" strokeWidth=".7" /></svg>
      SHIELD<br />INSURANCE
    </LogoDisc>
    <svg width="84" height="83" viewBox="0 0 84 83" {...black} strokeWidth="5"><path d="M12 44H6q-5-2-1-7L38 5q4-3 8 0l33 32q4 5-1 7h-5v32q0 4-4 4H54V61q0-4-4-4H36q-4 0-4 4v19H16q-4 0-4-4z" /></svg>
    <NavSelected>
      <svg width="78" height="80" viewBox="0 0 78 80" {...black} strokeWidth="2.600"><circle cx="6" cy="20" r="4" /><circle cx="21" cy="26" r="4" /><circle cx="36" cy="14" r="4" /><circle cx="51" cy="21" r="4" /><circle cx="66" cy="6" r="4" /><path d="M10 21l7 3M24 23l9-7M39 16l8 4M54 18l9-9M9 57H2V33h8M30 31v-4h8v30h-4M46 33h8v24h-8zM62 18h8v39h-8zM16 40h9v15h-9z" /><circle cx="21" cy="49" r="16" /><circle cx="21" cy="49" r="11.500" /><path d="M31 63l5-4 10 13q-1 5-6 5z" /></svg>
    </NavSelected>
    <svg width="84" height="84" viewBox="0 0 84 84" {...black} strokeWidth="2.800"><path d="M2 2l18 7v20L10 28 2 20zM82 2l-18 7v20l10-1 8-8zM20 10l12-3 10 2 12-3 10 4M42 9L31 19q-2 5 3 6 5 0 9-5l20 15q2 5-4 4 1 5-5 3 0 5-6 2-1 4-5 1M20 28l6 6M27 32l-4 5q2 5 6 1l4-6q-3-4-6 0zM33 35l-5 8q2 5 6 0l5-6q-2-5-6-2zM39 40l-4 6q3 5 7 0l2-4q-2-4-5-2zM48 30l9 9M43 35l9 8" /><circle cx="42" cy="61" r="20" /><circle cx="42" cy="61" r="15" /><path d="M47 55q-5-5-9 0 0 4 4 5 6 2 5 6-5 5-10 0M42 49v24" /><path d="M11 64V40M4 48l7-9 7 9M73 64V40M66 48l7-9 7 9M11 72v3M73 72v3" /></svg>
    <NavGap />
    <svg width="76" height="76" viewBox="0 0 76 76" {...black} strokeWidth="2.800"><path d="M13 17Q38-15 63 17 38 49 13 17z" /><circle cx="38" cy="17" r="14.500" /><path d="M31 18a7 7 0 107-8" /><circle cx="38" cy="43" r="7.500" /><circle cx="14" cy="45" r="6.500" /><circle cx="62" cy="45" r="6.500" /><path d="M24 72V62q1-9 9-9h10q8 0 9 9v10q-14 4-28 0zM20 70q-12 2-18-1V59q1-7 7-7h9q3 0 5 3M56 70q12 2 18-1V59q-1-7-7-7h-9q-3 0-5 3" /></svg>
  </NavStrip>
);

const Dashboard = () => (
  <Canvas>
    <Nav />
    <Report>
      <TopRow>
        <TopMain>
          <Banner>GENERAL VIEW</Banner>
          <Kpis>
            {kpis.map(([n, v, pr], i) => (
              <Kpi key={n}>
                <KpiTop $pr={pr}><div><KpiName>{n}</KpiName><KpiValue>{v}</KpiValue></div>{kpiIcons[i]}</KpiTop>
                <KpiNote>LM Chg% : 0.00%</KpiNote>
              </Kpi>
            ))}
          </Kpis>
        </TopMain>
        <Slicers>
          <SlicerHead>
            <span>Filters</span>
            <svg width="50" height="44" viewBox="0 0 50 44"><path d="M1 0h19v43q-5-2-5-6V19L1 8z" fill="#ffda2d" /><path d="M19 0h19v8L24 19v20l-5 4z" fill="#fdbf40" /><path d="M0 0h19v8H0z" fill="#fdbf40" /><path d="M19 0h19v8H19z" fill="#ff9f33" /><circle cx="38" cy="31" r="11.500" fill="#ff4c5c" /><path d="M38 19.500a11.500 11.500 0 010 23z" fill="#e8344f" /><path d="M34.500 27.500l7 7m0-7l-7 7" stroke="#fff" strokeWidth="2.600" /></svg>
          </SlicerHead>
          <Slicer $h={63}><SlicerName>Sales_Mode<Chev s={10} c="#777a8c" w={1} /></SlicerName><Dropdown>All<Chev s={13} w={1} /></Dropdown></Slicer>
          <Slicer $h={69}><SlicerName>Month_Name</SlicerName><Dropdown>All<Chev s={13} w={1} /></Dropdown></Slicer>
        </Slicers>
      </TopRow>
      <BottomRow>
        <Charts>
          <TrendCard $w={681} $h={208}><CardTitle>Revenue Trends By Month</CardTitle><Trend /></TrendCard>
          <CityRow>
            <BarCard title="Total Customers by city" data={customers} $w={319} $h={187} $top={0} />
            <BarCard title="Total Revenue by city" data={revenue} $w={321} $h={189} $top={-1} />
          </CityRow>
        </Charts>
        <TableArea>
          <TableTitle>Revenue &amp; Customers by Age Group &amp; City</TableTitle>
          <Card $w={408} $h={406} $r={18}>
            <TableBody>
              <Table>
                <HeadRow><div>City</div><div>Total Revenue</div><div>Age_Group</div><SortHead>Total Customers</SortHead></HeadRow>
                {rows.map((r, i) => <Row key={i}><div>{r[0]}</div><div>{r[1]}</div><div>{r[2]}</div><DataCell $w={(r[3] / 4361) * 100}>{r[3]}</DataCell></Row>)}
                <TotalRow><div>Total</div><div>989M</div><div /><TotalCell>26841</TotalCell></TotalRow>
              </Table>
              <ScrollTrack><ScrollThumb /></ScrollTrack>
            </TableBody>
          </Card>
        </TableArea>
      </BottomRow>
    </Report>
  </Canvas>
);

/* ---------- task bar ---------- */
const Chrome = ({ face }) => (
  <svg width="30" height="30" viewBox="0 0 30 30"><circle cx="15" cy="15" r="15" fill="#fbbc04" /><path d="M2 7.500A15 15 0 0128 7.500H15L8.500 19z" fill="#e33b2e" /><path d="M2 7.500A15 15 0 0015 30l6.500-11.500h-13z" fill="#249a48" /><circle cx="15" cy="15" r="7" fill="#fff" /><circle cx="15" cy="15" r="5.600" fill="#2a7de8" />{face}</svg>
);
const Face = ({ suit }) => <g><circle cx="25" cy="4" r="9.500" fill={suit ? '#b5bcc0' : '#6e5238'} /><circle cx="25" cy="0" r="3" fill="#d7a884" /><path d={suit ? 'M18 9q1-6 7-6t7 6q-7 8-14 0z' : 'M20 12q0-9 5-9t6 8q-5 4-11 1z'} fill={suit ? '#1b2745' : '#2d2622'} /></g>;
const Office = ({ c, l }) => (
  <svg width="30" height="30" viewBox="0 0 30 30"><rect x="8" y="0" width="22" height="30" rx="2" fill={c[0]} /><rect x="8" y="7.500" width="22" height="8" fill={c[1]} /><rect x="8" y="15" width="22" height="8" fill={c[2]} /><path d="M8 22h22v6q0 2-2 2H10q-2 0-2-2z" fill={c[3]} /><rect x="0" y="7" width="15" height="16" rx="1.500" fill={c[4]} /><text x="7.500" y="19.500" textAnchor="middle" fontSize="12" fontWeight="700" fill="#fff">{l}</text></svg>
);
const badge = (t, c, r = 10) => <g><circle cx="26" cy="3" r={r} fill={c} /><text x="26" y="7" textAnchor="middle" fontSize="11.500" fill="#fff">{t}</text></g>;
const tasks = [
  { w: 56, i: <svg width="30" height="30" viewBox="0 0 30 30"><defs><linearGradient id="wn" x1="0" y1="0" x2="1" y2="1"><stop offset="0" stopColor="#36c6f8" /><stop offset="1" stopColor="#0473ce" /></linearGradient></defs><path d="M2 1h12.500v13.500H1V2zM15.800 1H28l1 1v12.500H15.800zM1 15.800h13.500V29H2l-1-1zM15.800 15.800H29V28l-1 1H15.800z" fill="url(#wn)" /></svg> },
  { w: 56, i: <svg width="30" height="30" viewBox="0 0 30 30" fill="none" stroke="#222" strokeWidth="2.800"><circle cx="14" cy="13" r="10.500" /><path d="M21 21l7 7" strokeWidth="3.500" /></svg> },
  { i: <svg width="30" height="30" viewBox="0 0 30 30"><rect x="0" y="8" width="23" height="20" rx="1.500" fill="#2a2a2a" /><rect x="7" y="1" width="23" height="20" rx="1.500" fill="#f4f4f4" opacity=".8" /></svg> },
  { dot: 1, i: <svg width="32" height="30" viewBox="0 0 32 30"><path d="M1 4q0-2 2-2h8l3 4h15q2 0 2 2v12H1z" fill="#e0a00d" /><rect x="1" y="7" width="30" height="21" rx="1.500" fill="#fdd04a" /><path d="M7 28v-5q0-2 2-2h14q2 0 2 2v5z" fill="#1784d8" /></svg> },
  { i: <Office l="W" c={['#41a5ee', '#2b7cd3', '#185abd', '#103f91', '#185abd']} /> },
  { i: <Office l="X" c={['#33a867', '#21a366', '#107c41', '#185c37', '#107c41']} /> },
  { i: <svg width="32" height="30" viewBox="0 0 32 30"><path d="M1 6L27-1l2 5L3 10z" fill="#7a4fd0" /><rect x="1" y="9" width="30" height="21" rx="2" fill="#9a6cf0" /><path d="M1 9h10v7H1z" fill="#e3a0f5" /><path d="M11 9h10v7H11z" fill="#b77cf4" /><path d="M1 16h10v7H1z" fill="#b86ef0" /><path d="M21 16h10v7H21zM11 23h20v5q0 2-2 2H11z" fill="#5b38ee" /></svg> },
  { i: <svg width="30" height="30" viewBox="0 0 30 30"><defs><linearGradient id="cv" x1="0" y1="0" x2=".6" y2="1"><stop offset="0" stopColor="#00c4cc" /><stop offset=".5" stopColor="#2a88e0" /><stop offset="1" stopColor="#7d2ae8" /></linearGradient></defs><circle cx="15" cy="15" r="15" fill="url(#cv)" /><text x="15" y="18.500" textAnchor="middle" fontSize="9" fontStyle="italic" fontWeight="700" fill="#fff">Canva</text></svg> },
  { i: <svg width="30" height="30" viewBox="0 0 30 30"><path d="M9 4h4v22l-4 .5zM17 4h4v22.500l-4-.5z" fill="#a80710" /><path d="M9 4h4l8 22.500-4-.5z" fill="#e50914" /></svg> },
  { i: <svg width="30" height="30" viewBox="0 0 30 30"><rect x="1" y="1" width="28" height="28" fill="#f7f8f8" stroke="#d8d8d8" /><path d="M15 10v10M10 15h10M15 2.500v5M12.500 5h5M15 22.500v5M12.500 25h5M8.500 7v6M5.500 10h6M21.500 7v6M18.500 10h6M8.500 17v6M5.500 20h6M21.500 17v6M18.500 20h6M2.500 15h5M22.500 15h5" stroke="#2a6f95" strokeWidth="1.300" /></svg> },
  { i: <svg width="30" height="30" viewBox="0 0 30 30"><FaWhatsapp size={31} color="#1c8f57" />{badge('1', '#207a8c')}</svg> },
  { i: <svg width="30" height="30" viewBox="0 0 30 30"><rect width="30" height="30" rx="5" fill="#f9854d" /><path d="M18 3q5 2 5 8 0 4-2 6 0 5-6 7-5 0-9-3 5 0 8-3-4 0-6-3 3 1 6 0-3-1-4-4l7 1q2-4 1-9z" fill="#fff" /></svg> },
  { dot: 1, i: <svg width="30" height="30" viewBox="0 0 30 30"><rect x="2" y="2" width="26" height="26" rx="2" fill="#0a66c2" /><g transform="translate(5 5)"><FaLinkedinIn size={20} color="#fff" /></g>{badge('2', '#207a8c')}</svg> },
  { i: <svg width="30" height="30" viewBox="0 0 30 30"><rect width="30" height="30" rx="3" fill="#2f5d80" /><path d="M4 3q8 0 12 8t5 8l6 2-5 1-2 5q-1-7-6-9l-3 5q-1-8-4-12T4 3zM21 4l3 2 2-1-1 4-4-1z" fill="none" stroke="#d2e0ea" strokeWidth="1.200" /></svg> },
  { i: <svg width="30" height="30" viewBox="0 0 30 30"><path d="M1 6v18q0 2 2 2h4V11z" fill="#4285f4" /><path d="M29 6v18q0 2-2 2h-4V11z" fill="#34a853" /><path d="M23 5l4-1q2 0 2 3v3l-6 5z" fill="#fbbc04" /><path d="M1 10V7q0-4 5-2l9 7 8-6v9l-8 6-8-6z" fill="#ea4335" /></svg> },
  { dot: 1, i: <svg width="30" height="30" viewBox="0 0 30 30"><circle cx="15" cy="15" r="15" fill="#5865f2" /><g transform="translate(5 5)"><FaDiscord size={20} color="#fff" /></g>{badge('9+', '#e2453f', 9)}</svg> },
  { tile: 1, i: <svg width="24" height="30" viewBox="0 0 24 30"><rect x="12" y="0" width="11" height="30" rx="1.500" fill="#d29a0c" /><rect x="6" y="7" width="11" height="23" rx="1.500" fill="#edc13c" /><rect x="1" y="15" width="10" height="15" rx="1.500" fill="#f8d864" /></svg> },
  { i: <Chrome /> },
  { dot: 1, i: <svg width="30" height="30" viewBox="0 0 30 30"><circle cx="14" cy="15" r="13.500" fill="#e8f1f8" stroke="#4d87b5" strokeWidth="1.500" /><path d="M6 14l8-8q5 1 6 3l-5 5 5 4v4l-4 4-10-9z" fill="#2a70ae" /><Face /></svg> },
  { i: <svg width="30" height="30" viewBox="0 0 30 30"><rect width="30" height="30" rx="11" fill="#0b5cff" /><text x="15" y="18" textAnchor="middle" fontSize="8.500" fontWeight="600" fill="#fff">zoom</text></svg> },
  { dot: 1, i: <Chrome face={<Face />} /> },
  { dot: 1, i: <Chrome face={<Face suit />} /> },
  { dot: 1, i: <svg width="30" height="30" viewBox="0 0 30 30"><defs><linearGradient id="eg" x1="0" y1="0" x2="1" y2=".4"><stop offset="0" stopColor="#2aa8e0" /><stop offset="1" stopColor="#5bd75a" /></linearGradient></defs><circle cx="15" cy="15" r="15" fill="#1573c6" /><path d="M0 13A15 15 0 0130 14q0 7-8 7-5 0-4-3 2-8-7-8-8 0-11 8z" fill="url(#eg)" /><path d="M11 11q-6 4-2 11 4 8 13 6-7-1-9-7-1-4 2-6 0-4-4-4z" fill="#0f4f9a" /><path d="M17 18q0 5 11 3l-3 5q-9 0-10-7 0-2 1-3z" fill="#d4e0e0" /></svg> },
];

export default function App() {
  return (
    <>
      <Global />
      <Screen>
        <TitleBar>
          <TitleLeft>
            <svg width="96" height="22" viewBox="0 0 96 22" fill="none" stroke="#d6d6d6" strokeWidth="1.600"><path d="M1.500 1h18v18H4l-2.500-2.500zM5.500 1v7h10V1M6 19v-6h9v6M10 14v4" /><path d="M41 0v7h8M41 7q6-7 11-5 7 4 1 10l-5 6" /><path d="M94 0v7h-8M94 7q-6-7-11-5-7 4-1 10l5 6" opacity=".4" /></svg>
            <FileName>shield insurance virtual internship • Last saved: Today at 5:12 PM</FileName>
            <svg width="12" height="11" viewBox="0 0 12 11" fill="none" stroke="#d6d6d6" strokeWidth="1.200"><path d="M1 1h10L6 6.500z" /></svg>
          </TitleLeft>
          <SearchBox><Glass />Search</SearchBox>
          <TitleRight>
            Manoj R
            <svg width="26" height="26" viewBox="0 0 26 26"><circle cx="13" cy="13" r="12.500" fill="#383838" /><g fill="none" stroke="#bbb" strokeWidth="1.400"><circle cx="13" cy="7.500" r="3.800" /><path d="M6.500 13.500h13q1 0 1 1 0 6.500-7.500 6.500t-7.500-6.500q0-1 1-1z" /></g></svg>
            <svg width="13" height="13" viewBox="0 0 13 13"><path d="M0 6.500h13" stroke="#ddd" strokeWidth="1.400" /></svg>
            <svg width="14" height="14" viewBox="0 0 14 14" fill="none" stroke="#ddd" strokeWidth="1.400"><rect x="1" y="3.500" width="9.500" height="9.500" rx="2" /><path d="M4 1h6q3 0 3 3v6" /></svg>
            <svg width="14" height="14" viewBox="0 0 14 14"><path d="M1 1l12 12M13 1L1 13" stroke="#ddd" strokeWidth="1.500" /></svg>
          </TitleRight>
        </TitleBar>
        <MenuBar>
          <MenuItems>
            {[['File', 39], ['Home', 48], ['Insert', 44], ['Modeling', 74], ['View', 37], ['Optimize', 71], ['Help', 36]].map(([t, w]) => <MenuItem key={t} $w={w} $on={t === 'Home'}>{t}</MenuItem>)}
          </MenuItems>
          <ShareButton>
            <svg width="20" height="18" viewBox="0 0 20 18" fill="none" stroke="#b9cfca" strokeWidth="1.500"><path d="M1 5v12h14v-3M4 13q1-8 9-8V1l6 6-6 6V9q-5 0-9 4z" /></svg>
            Share<Chev s={13} w={1.100} />
          </ShareButton>
        </MenuBar>
        <Ribbon>
          <Group $w={201}>
            <GroupButtons $pad={12}>
              <PasteButton $w={46} $off>{icons.paste}<em>Paste</em></PasteButton>
              <ClipboardItems>
                <ClipboardItem><svg width="20" height="20" viewBox="0 0 20 20" fill="none" stroke="#8a8a8a" strokeWidth="1.500" opacity=".8"><path d="M6 1l7 13M14 1L7 14" /><circle cx="6" cy="16.500" r="2.600" stroke="#2f6f98" /><circle cx="14" cy="16.500" r="2.600" stroke="#2f6f98" /></svg>Cut</ClipboardItem>
                <ClipboardItem><svg width="20" height="20" viewBox="0 0 20 20" fill="none" stroke="#6a6a6a" strokeWidth="1.500"><path d="M7 17H1V1h6l4 4M7 5h7l5 5v9H7zM14 5v5h5M10 12h6M10 15h6" /></svg>Copy</ClipboardItem>
                <ClipboardItem><svg width="20" height="20" viewBox="0 0 20 20" fill="none" stroke="#777" strokeWidth="1.400"><path d="M1 11l7-5 7 6-6 7z" fill="#6f5128" /><path d="M8 6l3-2 2 2 4-5q3 0 2 3l-4 4 2 2-2 3" /></svg>Format painter</ClipboardItem>
              </ClipboardItems>
            </GroupButtons>
            <GroupLabel>Clipboard</GroupLabel>
          </Group>
          {ribbonGroups.map(g => (
            <Group key={g.label} $w={g.w}>
              <GroupButtons $pad={g.pad}>
                {g.items.map(([ic, w, a, b, chev, off]) => (
                  <RibbonButton key={ic} $w={w} $off={off}>{icons[ic]}<em>{a}</em><em>{b}{chev && <Chev s={8} w={1.800} />}</em></RibbonButton>
                ))}
              </GroupButtons>
              <GroupLabel>{g.label}</GroupLabel>
            </Group>
          ))}
          <Collapse><Chev up s={12} w={1.900} c="#ddd" /></Collapse>
        </Ribbon>

        <Workspace>
          <Rail>
            <RailItem $on><svg width="18" height="18" viewBox="0 0 18 18" fill="none" stroke="#e8e8e8" strokeWidth="1.400"><path d="M1 0v17h17" /><rect x="3.800" y="4" width="2.600" height="10" /><rect x="8.500" y="7" width="2.600" height="7" /><rect x="13.200" y="2" width="2.600" height="12" /></svg></RailItem>
            <RailItem><svg width="22" height="20" viewBox="0 0 22 20" fill="none"><Cells x={1} y={1} w={20} h={18} cols={3} rows={3} head={2} c="#d8d8d8" /></svg></RailItem>
            <RailItem><svg width="24" height="24" viewBox="0 0 24 24" fill="none" stroke="#d8d8d8" strokeWidth="1.400"><path d="M1 8h9v9H1zM1 11h9M14 1h9v8h-9zM14 4h9M14 15h9v8h-9zM14 18h9M6 8V5h8M6 17v3h8" /></svg></RailItem>
            <RailItem><svg width="24" height="22" viewBox="0 0 24 22" fill="none" stroke="#d8d8d8" strokeWidth="1.300"><path d="M6 13V1h8l5 5v10M13 1v6h6M21 8v9q0 4-4 3" /><text x="0" y="20" fontSize="9" fontWeight="600" fill="#d8d8d8" stroke="none">DAX</text></svg></RailItem>
          </Rail>
          <Center>
            <CanvasRow>
              <Dashboard />
              <FilterPane>
                <Dbl c="#333" w={1.300} />
                <FilterGlyph width="13" height="13" viewBox="0 0 13 13"><path d="M12 1v11M8.500 3v7M5 5v3" stroke="#333" strokeWidth="1.500" /></FilterGlyph>
                <VerticalLabel $size={17.8} $mr={1}>Filters</VerticalLabel>
              </FilterPane>
            </CanvasRow>
            <Tabs>
              <TabTools>
                <DeviceTool $on $top={8} $gap={24}><svg width="20" height="20" viewBox="0 0 20 20" fill="none" stroke="#fff" strokeWidth="1.700"><rect x="1" y="1" width="18" height="13" rx="2" /><path d="M4 18.500h12M7.500 15v3M12.500 15v3" /></svg></DeviceTool>
                <DeviceTool $top={6} $gap={19}><svg width="14" height="23" viewBox="0 0 14 23" fill="none" stroke="#fff" strokeWidth="1.600"><rect x="1" y="1" width="12" height="21" rx="2.500" /><path d="M5 18.500h4" /></svg></DeviceTool>
                <Arrow $w={27}><svg width="8" height="11" viewBox="0 0 8 11" fill="none" stroke="#bbb" strokeWidth="1.200"><path d="M7 1v9L1.500 5.500z" /></svg></Arrow>
                <Arrow $w={8}><svg width="8" height="11" viewBox="0 0 8 11" fill="none" stroke="#bbb" strokeWidth="1.200"><path d="M1 1v9l5.500-4.500z" /></svg></Arrow>
              </TabTools>
              <Tab $w={128}>Home Page</Tab><Tab $w={140} $on>General View</Tab><Tab $w={95}>Page 2</Tab>
              <AddTab><svg width="12" height="14" viewBox="0 0 14 14"><path d="M0 7h14M7 0v14" stroke="#1f1f1f" strokeWidth="3.500" /></svg></AddTab>
            </Tabs>
          </Center>
          <Bookmarks><Dbl /><VerticalLabel $size={18.5} $mr={5}>Bookmarks</VerticalLabel></Bookmarks>
          <VizPane>
            <PaneTitle>Visualizations<Dbl right /></PaneTitle>
            <SubTitle>Build visual</SubTitle>
            <Modes>
              <Mode $on><svg width="30" height="31" viewBox="0 0 30 31"><path d="M0 1h24" stroke="#bbb" strokeWidth="1.300" /><g fill="#2baa94" stroke="#d0d0d0" strokeDasharray="2.500 1.500"><rect x=".7" y="7" width="28.600" height="9.500" /><rect x=".7" y="20.500" width="28.600" height="9.500" /></g></svg></Mode>
              <Mode><svg width="30" height="30" viewBox="0 0 30 30" fill="none" stroke="#bbb" strokeWidth="1.400"><path d="M7 29H1V1h12l9 9M29 11L17 22l3 3z" /><path d="M13 1v9h9z" fill="#fff" /><path d="M16 22q-5 0-5 4-1 3-4 3 9 2 13-4z" /></svg></Mode>
            </Modes>
            <ModeRule width="225" height="13" viewBox="0 0 225 13" fill="none" stroke="#6b6b6b"><path d="M0 10.500h20l10-10 10 10h185" /></ModeRule>
            <VizGrid>
              {gallery.map((g, i) => <React.Fragment key={i}>{g}</React.Fragment>)}
              <svg width="16" height="5" viewBox="0 0 16 5" fill="#ddd"><circle cx="2" cy="2" r="1.500" /><circle cx="7.500" cy="2" r="1.500" /><circle cx="13" cy="2" r="1.500" /></svg>
            </VizGrid>
            <FieldLabel $h={38} $lh={42}>Values</FieldLabel>
            <FieldWell $h={35} $pad={12}>Add data fields here</FieldWell>
            <FieldLabel $h={38.5} $lh={45} $w={600}>Drill through</FieldLabel>
            <ToggleRow>Cross-report<Toggle>Off</Toggle></ToggleRow>
            <ToggleRow>Keep all filters<Toggle $on>On</Toggle></ToggleRow>
            <FieldLabel $h={6.5} />
            <FieldWell $h={32} $pad={10} $bg="#000">Add drill-through fields here</FieldWell>
          </VizPane>
          <DataPane>
            <PaneTitle>Data<Dbl right /></PaneTitle>
            <FieldSearch><Glass s={18} flip />Search</FieldSearch>
            <TreeArea>
              <Tree>
                {tree.map(([k, t], i) => {
                  const group = k === 'g' || k === 't';
                  return (
                    <TreeRow key={i} $child={!group}>
                      {group ? <Chev s={11} w={1.500} /> : <Checkbox />}
                      <IconSlot $ml={group ? 7 : 0}>
                        {k === 'g' && <Calc stack />}{k === 'm' && <Calc />}{k === 't' && <TableIco />}{k === 's' && <ColIco />}{k === 'f' && <ColIco fx />}
                      </IconSlot>
                      <span>{t}</span>
                    </TreeRow>
                  );
                })}
              </Tree>
              <TreeScroll />
            </TreeArea>
          </DataPane>
        </Workspace>

        <StatusBar>
          <span>Page 2 of 3</span>
          <Zoom>
            <svg width="156" height="16" viewBox="0 0 156 16" stroke="#d6d6d6" fill="none"><path d="M0 7.500h6" strokeWidth="1.800" /><path d="M12 7.500h125M74.500 4v8" /><rect x="57.500" y="1.500" width="4" height="12" fill="#d6d6d6" /><path d="M143 7.500h10M148 2.500v10" strokeWidth="1.800" /></svg>
            <span>79%</span>
            <svg width="19" height="14" viewBox="0 0 19 14" fill="none" stroke="#d6d6d6" strokeWidth="1.300"><rect x="1" y="1" width="17" height="12" rx="2" /><path d="M4 6V4h2.500M4 8v2h2.500M15 6V4h-2.500M15 8v2h-2.500" /></svg>
          </Zoom>
        </StatusBar>
        <TaskBar>
          <TaskWeather>
            <svg width="36" height="38" viewBox="0 0 36 38"><circle cx="15" cy="17" r="9" fill="#f59a23" /><path d="M7 36q-7-1-6-7 1-5 6-5 2-8 9-8 8 0 9 8 6 1 6 6t-6 6z" fill="#b5cdf2" /><path d="M7 36q-7-1-6-6 15 6 30 0 0 6-6 6z" fill="#8fb1ea" /><circle cx="24.500" cy="11" r="9.800" fill="#c42b1c" /><text x="24.500" y="15.500" textAnchor="middle" fontSize="12.500" fill="#fff">8</text></svg>
          </TaskWeather>
          {tasks.map((t, i) => (
            <TaskItem key={i} $w={t.w}>
              {t.tile ? <TaskTile>{t.i}<Dot $w={20} $c="#20808c" /></TaskTile> : <>{t.i}{t.dot && <Dot />}</>}
            </TaskItem>
          ))}
          <TaskItem $w={4} />
          <TaskSep />
          <TaskItem $w={57}><svg width="28" height="30" viewBox="0 0 28 30"><rect x="1" y="3" width="26" height="26" rx="3" fill="#1e62b8" /><path d="M1 22L13 10l13 18q-1 1-2 1H4q-3 0-3-3z" fill="#38c0e8" /><circle cx="20.500" cy="8" r="2.300" fill="#fff" /></svg><Dot /></TaskItem>
          <TaskItem $w={53}><svg width="22" height="30" viewBox="0 0 22 30" fill="#222"><circle cx="3" cy="16" r="2" /><circle cx="11" cy="16" r="2" /><circle cx="19" cy="16" r="2" /></svg></TaskItem>
          <TaskItem $w={4} />
          <TaskSep />
          <Tray>
            <Chev up s={14} w={1.300} />
            <TrayText $align="center" $ml={26}>ENG<br />IN</TrayText>
            <TraySymbols>
              <svg width="20" height="18" viewBox="0 0 20 18" fill="none" stroke="#222" strokeWidth="1.500"><path d="M1 6.500q9-9 18 0M4 10q6-6 12 0M7 13q3-3 6 0" /><circle cx="10" cy="15.500" r="1.200" fill="#222" /></svg>
              <svg width="20" height="18" viewBox="0 0 20 18" fill="none" stroke="#222" strokeWidth="1.400"><path d="M1 6h3l5-4v14l-5-4H1zM12 6q2 3 0 6M14.500 3.500q4 5.500 0 11" /><path d="M17 2q4 7 0 14" opacity=".35" /></svg>
              <svg width="21" height="18" viewBox="0 0 21 18" fill="none" stroke="#222" strokeWidth="1.500"><path d="M7 4h9q2 0 2 2v7q0 2-2 2H5q-2 0-2-2V9M19.500 8v3" /><rect x="6" y="6.500" width="9.500" height="6" fill="#222" /><path d="M4 0v4M1 3h7v3L5 9 1 6z" fill="#222" strokeWidth=".6" /></svg>
            </TraySymbols>
            <TrayText $align="right" $ml={0}>08:13 PM<br />18-02-2025</TrayText>
          </Tray>
        </TaskBar>
      </Screen>
    </>
  );
}
